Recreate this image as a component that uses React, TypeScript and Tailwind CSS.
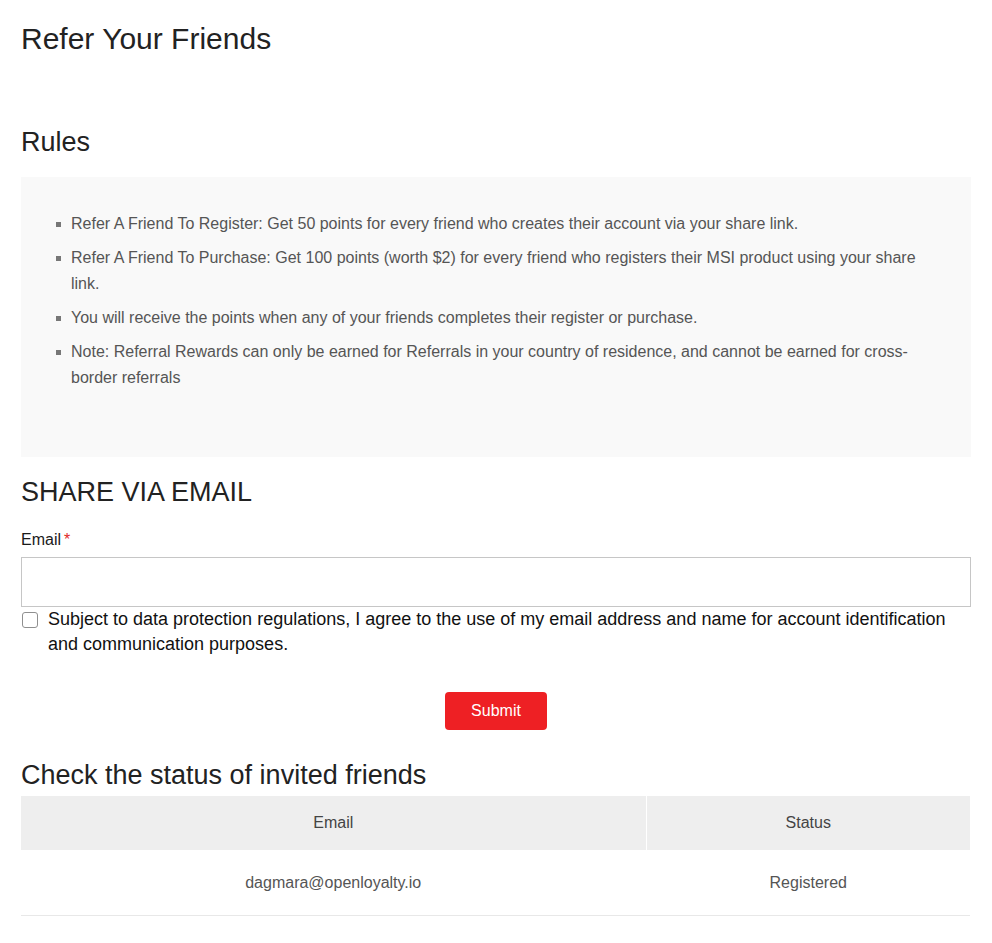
import React from "react";

const rules: string[] = [
  "Refer A Friend To Register: Get 50 points for every friend who creates their account via your share link.",
  "Refer A Friend To Purchase: Get 100 points (worth $2) for every friend who registers their MSI product using your share link.",
  "You will receive the points when any of your friends completes their register or purchase.",
  "Note: Referral Rewards can only be earned for Referrals in your country of residence, and cannot be earned for cross-border referrals",
];

export default function App() {
  return (
    <div className="min-h-screen bg-white px-[21px] font-['Liberation_Sans',Arial,sans-serif] text-[#222]">
      <h1 className="pt-[22px] text-[30px] leading-[34px] font-normal text-[#222]">Refer Your Friends</h1>

      <h2 className="mt-[71px] text-[27px] leading-[30px] font-normal text-[#222]">Rules</h2>

      <div className="mt-[20px] h-[280px] bg-[#f9f9f9] pt-[34px] pl-[35px]">
        <ul className="flex w-[860px] flex-col gap-2">
          {rules.map((r) => (
            <li key={r} className="flex text-[16px] leading-[26px] text-[#555]">
              <span className="mt-[11px] mr-[10px] h-[5px] w-[5px] shrink-0 bg-[#777]" />
              <span>{r}</span>
            </li>
          ))}
        </ul>
      </div>

      <h2 className="mt-[20px] text-[27px] leading-[30px] font-normal text-[#222]">SHARE VIA EMAIL</h2>

      <label className="mt-[23px] block text-[16px] leading-[20px] text-[#1a1a1a]">
        Email<span className="ml-[3px] text-[#e02b27]">*</span>
      </label>
      <input
        type="email"
        className="mt-[7px] block h-[50px] w-full border border-[#c6c6c6] bg-white px-3 text-[16px] outline-none"
      />

      <div className="flex items-start">
        <span className="mt-[5px] ml-px h-[16px] w-[16px] shrink-0 rounded-[3px] border border-[#8f8f8f] bg-white" />
        <p className="ml-[10px] text-[18px] leading-[25px] text-[#111]">
          Subject to data protection regulations, I agree to the use of my email address and name for account identification and communication purposes.
        </p>
      </div>

      <div className="mt-[35px] flex justify-center">
        <button className="h-[38px] w-[102px] rounded-[4px] bg-[#ee2024] text-[16px] text-white">Submit</button>
      </div>

      <h2 className="mt-[30px] text-[27px] leading-[30px] font-normal text-[#222]">Check the status of invited friends</h2>

      <table className="mt-[6px] w-[949px] border-collapse text-[16px]">
        <thead>
          <tr className="h-[54px] bg-[#eeeeee]">
            <th className="w-[625px] border-r border-white font-normal text-[#444]">Email</th>
            <th className="font-normal text-[#444]">Status</th>
          </tr>
        </thead>
        <tbody>
          <tr className="h-[65px]">
            <td className="border-r border-b border-r-white border-b-[#e8e8e8] pt-[2px] text-center text-[#555]">dagmara@openloyalty.io</td>
            <td className="border-b border-[#e8e8e8] pt-[2px] text-center text-[#555]">Registered</td>
          </tr>
        </tbody>
      </table>
    </div>
  );
}
